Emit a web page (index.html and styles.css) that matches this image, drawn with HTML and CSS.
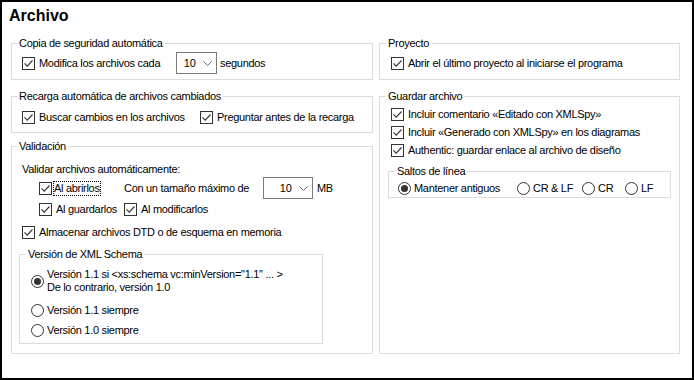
FILE: index.html
```html
<!DOCTYPE html>
<html lang="es">
<head>
  <meta charset="UTF-8" />
  <title>Archivo</title>
  <link rel="stylesheet" href="styles.css">
</head>
<body>

  <div class="window">
    <h1>Archivo</h1>

    <div class="columns">
      <!-- left column -->
      <div class="col">
        <fieldset class="group g-backup">
          <legend>Copia de seguridad automática</legend>
          <div class="row row-combo">
            <label class="check w-modifica"><span class="box"><svg viewBox="0 0 11 11"><path d="M1.5 5.3l2.7 2.8 5.3-5.6"/></svg></span>Modifica los archivos cada</label>
            <div class="combo"><span>10</span><svg viewBox="0 0 9 5"><path d="M0.5 0.5l4 4 4-4"/></svg></div>
            <span class="unit">segundos</span>
          </div>
        </fieldset>

        <fieldset class="group g-reload">
          <legend>Recarga automática de archivos cambiados</legend>
          <div class="row">
            <label class="check w-buscar"><span class="box"><svg viewBox="0 0 11 11"><path d="M1.5 5.3l2.7 2.8 5.3-5.6"/></svg></span>Buscar cambios en los archivos</label>
            <label class="check"><span class="box"><svg viewBox="0 0 11 11"><path d="M1.5 5.3l2.7 2.8 5.3-5.6"/></svg></span>Preguntar antes de la recarga</label>
          </div>
        </fieldset>

        <fieldset class="group g-valid">
          <legend>Validación</legend>
          <div class="caption">Validar archivos automáticamente:</div>
          <div class="auto-grid">
            <label class="check"><span class="box tight"><svg viewBox="0 0 11 11"><path d="M1.5 5.3l2.7 2.8 5.3-5.6"/></svg></span><span class="focus">Al abrirlos</span></label>
            <div class="size">
              <span class="size-text">Con un tamaño máximo de</span>
              <div class="combo combo-wide"><span>10</span><svg viewBox="0 0 9 5"><path d="M0.5 0.5l4 4 4-4"/></svg></div>
              <span class="unit unit-mb">MB</span>
            </div>
            <label class="check"><span class="box"><svg viewBox="0 0 11 11"><path d="M1.5 5.3l2.7 2.8 5.3-5.6"/></svg></span>Al guardarlos</label>
            <label class="check"><span class="box"><svg viewBox="0 0 11 11"><path d="M1.5 5.3l2.7 2.8 5.3-5.6"/></svg></span>Al modificarlos</label>
          </div>
          <div class="row row-cache">
            <label class="check"><span class="box"><svg viewBox="0 0 11 11"><path d="M1.5 5.3l2.7 2.8 5.3-5.6"/></svg></span>Almacenar archivos DTD o de esquema en memoria</label>
          </div>

          <fieldset class="group g-schema">
            <legend>Versión de XML Schema</legend>
            <label class="option option-multi"><span class="radio on"></span><span>Versión 1.1 si &lt;xs:schema vc:minVersion="1.1" ... &gt;<br>De lo contrario, versión 1.0</span></label>
            <label class="option option-1"><span class="radio"></span>Versión 1.1 siempre</label>
            <label class="option option-2"><span class="radio"></span>Versión 1.0 siempre</label>
          </fieldset>
        </fieldset>
      </div>

      <!-- right column -->
      <div class="col">
        <fieldset class="group g-project">
          <legend>Proyecto</legend>
          <div class="row row-combo">
            <label class="check"><span class="box"><svg viewBox="0 0 11 11"><path d="M1.5 5.3l2.7 2.8 5.3-5.6"/></svg></span>Abrir el último proyecto al iniciarse el programa</label>
          </div>
        </fieldset>

        <fieldset class="group g-save">
          <legend>Guardar archivo</legend>
          <div class="row">
            <label class="check"><span class="box"><svg viewBox="0 0 11 11"><path d="M1.5 5.3l2.7 2.8 5.3-5.6"/></svg></span>Incluir comentario «Editado con XMLSpy»</label>
          </div>
          <div class="row">
            <label class="check"><span class="box"><svg viewBox="0 0 11 11"><path d="M1.5 5.3l2.7 2.8 5.3-5.6"/></svg></span>Incluir «Generado con XMLSpy» en los diagramas</label>
          </div>
          <div class="row">
            <label class="check"><span class="box"><svg viewBox="0 0 11 11"><path d="M1.5 5.3l2.7 2.8 5.3-5.6"/></svg></span>Authentic: guardar enlace al archivo de diseño</label>
          </div>

          <fieldset class="group g-breaks">
            <legend>Saltos de línea</legend>
            <div class="row">
              <label class="option w-keep"><span class="radio on"></span>Mantener antiguos</label>
              <label class="option w-crlf"><span class="radio"></span>CR &amp; LF</label>
              <label class="option w-cr"><span class="radio"></span>CR</label>
              <label class="option"><span class="radio"></span>LF</label>
            </div>
          </fieldset>
        </fieldset>
      </div>
    </div>
  </div>

</body>
</html>
```

FILE: styles.css
```css
* {
  box-sizing: border-box;
}

body {
  margin: 0;
  background: #fff;
  color: #000;
  font-family: "Liberation Sans", Arial, sans-serif;
  font-size: 11px;
  line-height: 13px;
  letter-spacing: -0.3px;
}

.window {
  width: 694px;
  height: 380px;
  border: 2px solid #000;
  padding: 5px 12px 0 9px;
  background: #fff;
}

h1 {
  margin: 0 0 0 -2px;
  font-size: 16px;
  line-height: 18px;
  font-weight: bold;
  letter-spacing: 0;
}

.columns {
  display: grid;
  grid-template-columns: 362px 301px;
  column-gap: 6px;
  margin-top: 11px;
}

.col {
  display: flex;
  flex-direction: column;
}

/* group boxes */
.group {
  margin: 0;
  min-width: 0;
  border: 1px solid #dcdcdc;
  padding: 0 8px 0 10px;
}

.group legend {
  padding: 0 2px;
  margin-left: -5px;
  line-height: 15px;
}

.g-backup,
.g-project {
  padding-top: 1px;
  padding-bottom: 5px;
}

.g-reload {
  margin-top: 9px;
  padding-top: 4px;
  padding-bottom: 6px;
}

.g-valid {
  margin-top: 6px;
  padding-top: 8px;
  padding-bottom: 9px;
}

.g-schema {
  width: 304px;
  margin: 6px 0 0 -3px;
  padding: 6px 8px 4px 11px;
}

.g-project,
.g-save {
  padding-left: 11px;
}

.g-save {
  flex: 1;
  margin-top: 9px;
  padding-top: 1px;
}

.g-breaks {
  width: 283px;
  margin: 5px 0 0 -3px;
  padding: 0 8px 0 9px;
}

.g-breaks legend {
  margin-left: -3px;
}

/* rows */
.row {
  display: flex;
  align-items: center;
  height: 18px;
}

.row-combo {
  height: 22px;
}

.row-cache {
  margin-top: 5px;
}

.caption {
  height: 14px;
  line-height: 14px;
}

.auto-grid {
  display: grid;
  grid-template-columns: 85px auto;
  grid-template-rows: 24px 18px;
  align-items: center;
  padding-left: 17px;
}

.size {
  display: flex;
  align-items: center;
}

.size-text {
  width: 139px;
}

/* checkboxes */
.check {
  display: flex;
  align-items: center;
  white-space: nowrap;
}

.box {
  width: 13px;
  height: 13px;
  margin-right: 4px;
  border: 1px solid #333;
  background: #fff;
  flex-shrink: 0;
}

.box.tight {
  margin-right: 1px;
}

.box svg {
  display: block;
  width: 11px;
  height: 11px;
}

.box path {
  fill: none;
  stroke: #333;
  stroke-width: 1.1;
}

.focus {
  padding: 1px 1px;
  outline: 1px dotted #000;
  outline-offset: -1px;
}

.w-modifica {
  width: 154px;
}

.w-buscar {
  width: 178px;
}

/* combo boxes */
.combo {
  display: flex;
  align-items: center;
  justify-content: flex-end;
  gap: 7px;
  width: 41px;
  height: 22px;
  padding-right: 4px;
  border: 1px solid #7a7a7a;
  background: #fff;
  letter-spacing: 0;
}

.combo-wide {
  width: 50px;
}

.combo svg {
  width: 9px;
  height: 5px;
}

.combo path {
  fill: none;
  stroke: #666;
  stroke-width: 1;
}

.unit {
  margin-left: 3px;
}

.unit-mb {
  margin-left: 4px;
}

/* radio buttons */
.option {
  display: flex;
  align-items: center;
  white-space: nowrap;
  height: 18px;
}

.option-multi {
  height: 26px;
}

.option-1 {
  margin-top: 7px;
}

.option-2 {
  margin-top: 2px;
}

.radio {
  position: relative;
  width: 13px;
  height: 13px;
  margin-right: 3px;
  border: 1px solid #333;
  border-radius: 50%;
  background: #fff;
  flex-shrink: 0;
}

.radio.on::after {
  content: "";
  position: absolute;
  left: 2px;
  top: 2px;
  width: 7px;
  height: 7px;
  border-radius: 50%;
  background: #333;
}

.w-keep {
  width: 119px;
}

.w-crlf {
  width: 65px;
}

.w-cr {
  width: 43px;
}
```
